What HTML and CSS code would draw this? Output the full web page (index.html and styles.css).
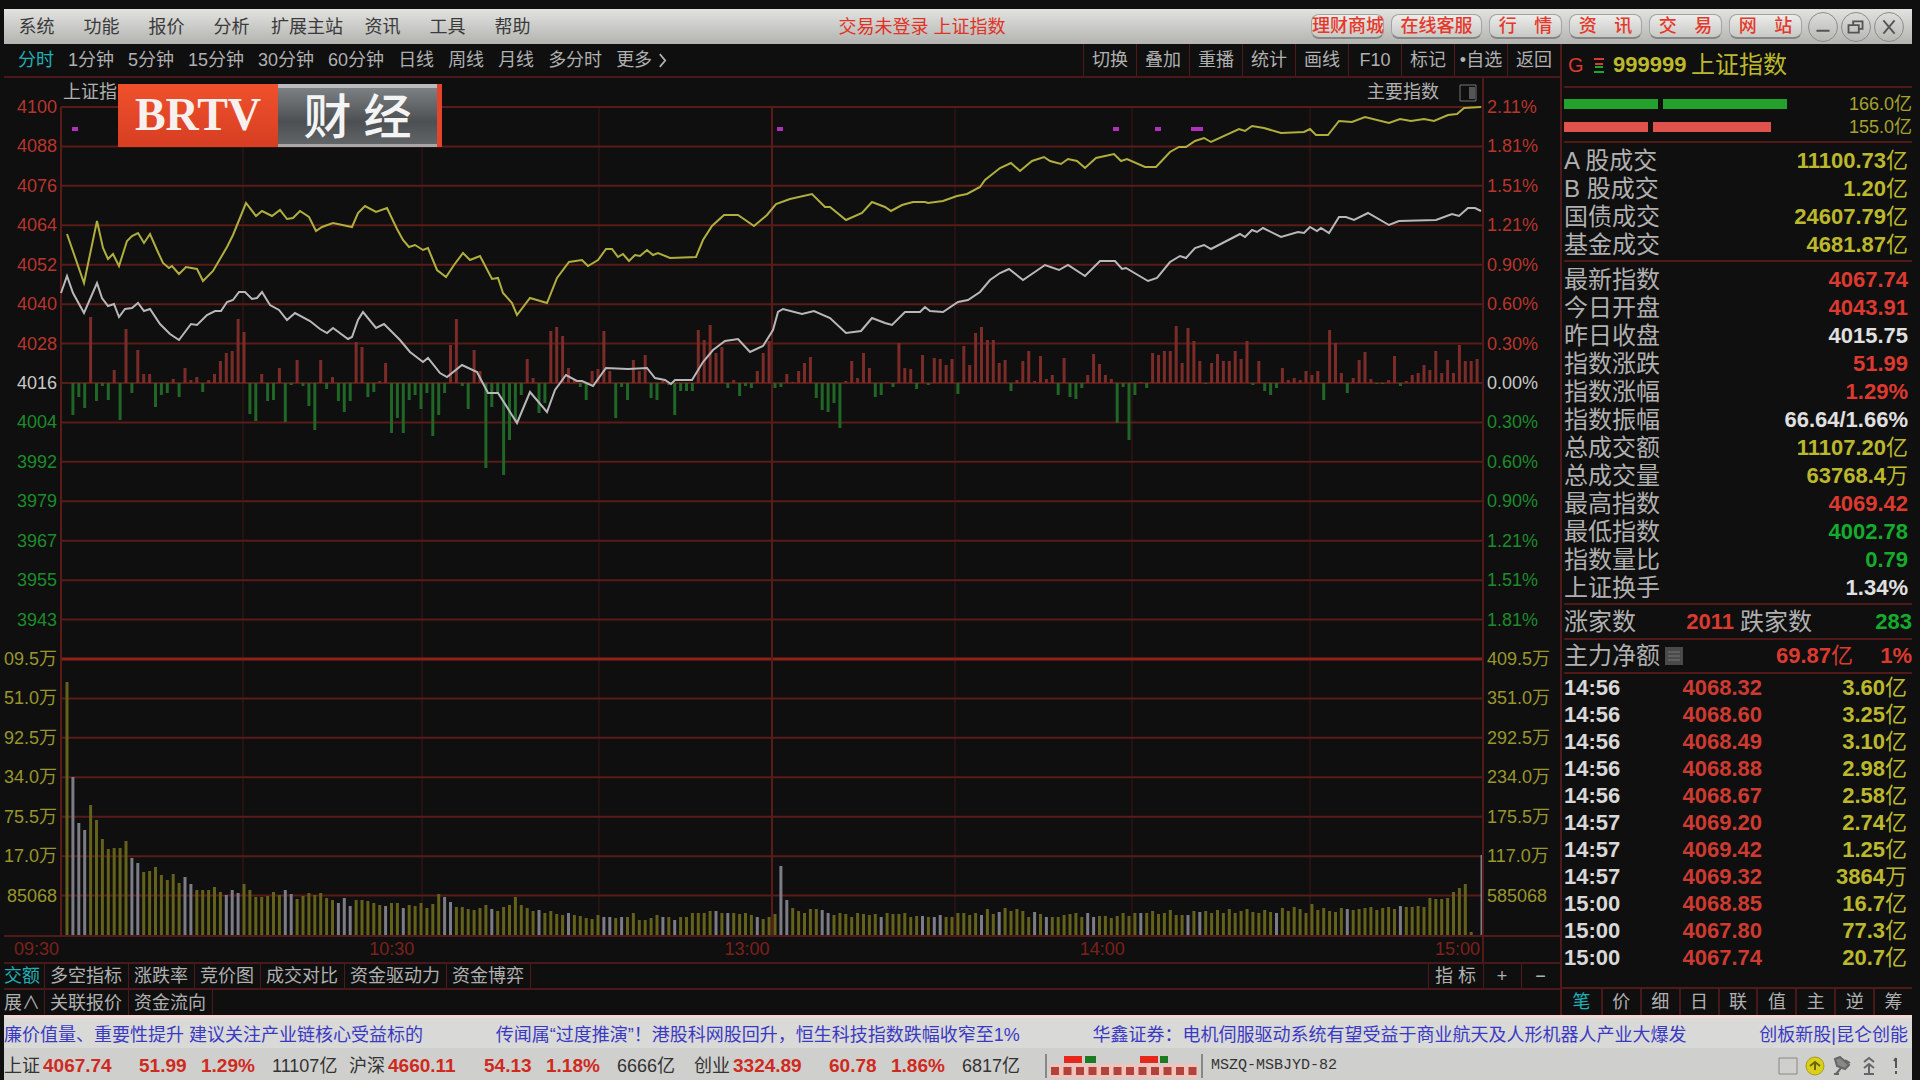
FILE: index.html
```html
<!DOCTYPE html>
<html lang="zh-CN">
<head>
<meta charset="utf-8">
<title>上证指数</title>
<link rel="stylesheet" href="styles.css">
</head>
<body>
<header class="menubar">
  <nav class="menus">
    <button>系统</button><button>功能</button><button>报价</button><button>分析</button><button>扩展主站</button><button>资讯</button><button>工具</button><button>帮助</button>
  </nav>
  <h1 class="title">交易未登录 上证指数</h1>
  <div class="quick">
    <button class="pill tight">理财商城</button><button class="pill wide">在线客服</button><button class="pill"><span>行</span><span>情</span></button><button class="pill"><span>资</span><span>讯</span></button><button class="pill"><span>交</span><span>易</span></button><button class="pill"><span>网</span><span>站</span></button>
  </div>
  <div class="winctl">
    <button aria-label="最小化"><svg viewBox="0 0 30 30"><path d="M8 19h14" /></svg></button>
    <button aria-label="还原"><svg viewBox="0 0 30 30"><path d="M12 13V9h10v8h-4M7 13h11v8H7z" /></svg></button>
    <button aria-label="关闭"><svg viewBox="0 0 30 30"><path d="M9 8l12 14M21 8L9 22" /></svg></button>
  </div>
</header>

<main class="workspace">
  <section class="left">
    <div class="toolbar">
      <nav class="periods">
        <button class="on">分时</button><button>1分钟</button><button>5分钟</button><button>15分钟</button><button>30分钟</button><button>60分钟</button><button>日线</button><button>周线</button><button>月线</button><button>多分时</button><button>更多<svg class="chev" viewBox="0 0 10 16"><path d="M2 1l6 7-6 7" /></svg></button>
      </nav>
      <nav class="tools">
        <button>切换</button><button>叠加</button><button>重播</button><button>统计</button><button>画线</button><button>F10</button><button>标记</button><button>•自选</button><button>返回</button>
      </nav>
    </div>
    <div class="charthead">
      <span class="chartname">上证指</span>
      <div class="overlay">
        <button>主要指数</button>
        <svg class="panelicon" viewBox="0 0 20 18"><path d="M2 1h16v16H2z" /><path class="fill" d="M11 3h6v12h-6z" /></svg>
      </div>
      <div class="corner"></div>
    </div>
    <div class="chart">
      <div class="axis axis-left" id="axisLeft"></div>
      <svg class="plot" id="plot" viewBox="61 107 1421 828" preserveAspectRatio="none" role="img" aria-label="上证指数分时走势"></svg>
      <div class="axis axis-right" id="axisRight"></div>
    </div>
    <div class="times"><span>09:30</span><span>10:30</span><span>13:00</span><span>14:00</span><span>15:00</span><span class="rest"></span></div>
    <nav class="tabs">
      <button class="on">交额</button><button>多空指标</button><button>涨跌率</button><button>竞价图</button><button>成交对比</button><button>资金驱动力</button><button>资金博弈</button>
      <div class="indicators"><button class="ind">指 标</button><button class="zoom">+</button><button class="zoom last">−</button></div>
    </nav>
    <nav class="tabs second"><button>展∧</button><button>关联报价</button><button>资金流向</button></nav>
    <div class="logo"><span class="brand">BRTV</span><span class="channel"><b>财</b><b>经</b></span></div>
  </section>

  <aside class="side">
    <div class="symbol">
      <span class="g">G</span>
      <svg viewBox="0 0 12 18"><path class="sr" d="M1 3h10" /><path class="sr" d="M2 8h8" /><path class="sg" d="M2 11h8" /><path class="sg" d="M1 16h10" /></svg>
      <b>999999</b><span class="name">上证指数</span>
    </div>
    <div class="depth">
      <div class="drow"><i class="up" style="width:94px"></i><i class="up" style="width:124px"></i><span>166.0亿</span></div>
      <div class="drow"><i class="dn" style="width:84px"></i><i class="dn" style="width:118px"></i><span>155.0亿</span></div>
    </div>
    <table class="info">
      <tbody>
      <tr><th scope="row">A 股成交</th><td class="y">11100.73<em>亿</em></td></tr>
      <tr><th scope="row">B 股成交</th><td class="y">1.20<em>亿</em></td></tr>
      <tr><th scope="row">国债成交</th><td class="y">24607.79<em>亿</em></td></tr>
      <tr><th scope="row">基金成交</th><td class="y">4681.87<em>亿</em></td></tr>
      </tbody>
    </table>
    <table class="info">
      <tbody>
      <tr><th scope="row">最新指数</th><td class="r">4067.74</td></tr>
      <tr><th scope="row">今日开盘</th><td class="r">4043.91</td></tr>
      <tr><th scope="row">昨日收盘</th><td class="w">4015.75</td></tr>
      <tr><th scope="row">指数涨跌</th><td class="r">51.99</td></tr>
      <tr><th scope="row">指数涨幅</th><td class="r">1.29%</td></tr>
      <tr><th scope="row">指数振幅</th><td class="w">66.64/1.66%</td></tr>
      <tr><th scope="row">总成交额</th><td class="y">11107.20<em>亿</em></td></tr>
      <tr><th scope="row">总成交量</th><td class="y">63768.4<em>万</em></td></tr>
      <tr><th scope="row">最高指数</th><td class="r">4069.42</td></tr>
      <tr><th scope="row">最低指数</th><td class="g">4002.78</td></tr>
      <tr><th scope="row">指数量比</th><td class="g">0.79</td></tr>
      <tr><th scope="row">上证换手</th><td class="w">1.34%</td></tr>
      </tbody>
    </table>
    <div class="pair"><span>涨家数</span><b class="r">2011</b><span>跌家数</span><b class="g">283</b></div>
    <div class="net"><span>主力净额</span><svg viewBox="0 0 20 20"><path d="M1 1h18v18H1z" /><path class="bar" d="M4 6h12M4 10h12M4 14h12" /></svg><b class="r">69.87<em>亿</em></b><b class="r pct">1%</b></div>
    <table class="ticks">
      <tbody>
      <tr><td>14:56</td><td>4068.32</td><td>3.60<em>亿</em></td></tr>
      <tr><td>14:56</td><td>4068.60</td><td>3.25<em>亿</em></td></tr>
      <tr><td>14:56</td><td>4068.49</td><td>3.10<em>亿</em></td></tr>
      <tr><td>14:56</td><td>4068.88</td><td>2.98<em>亿</em></td></tr>
      <tr><td>14:56</td><td>4068.67</td><td>2.58<em>亿</em></td></tr>
      <tr><td>14:57</td><td>4069.20</td><td>2.74<em>亿</em></td></tr>
      <tr><td>14:57</td><td>4069.42</td><td>1.25<em>亿</em></td></tr>
      <tr><td>14:57</td><td>4069.32</td><td>3864<em>万</em></td></tr>
      <tr><td>15:00</td><td>4068.85</td><td>16.7<em>亿</em></td></tr>
      <tr><td>15:00</td><td>4067.80</td><td>77.3<em>亿</em></td></tr>
      <tr><td>15:00</td><td>4067.74</td><td>20.7<em>亿</em></td></tr>
      </tbody>
    </table>
    <nav class="sidetabs"><button class="on">笔</button><button>价</button><button>细</button><button>日</button><button>联</button><button>值</button><button>主</button><button>逆</button><button>筹</button></nav>
  </aside>
</main>

<div class="ticker">
  <a href="#">廉价值量、重要性提升 建议关注产业链核心受益标的</a>
  <a href="#">传闻属“过度推演”！港股科网股回升，恒生科技指数跌幅收窄至1%</a>
  <a href="#">华鑫证券：电机伺服驱动系统有望受益于商业航天及人形机器人产业大爆发</a>
  <a href="#">创板新股|昆仑创能</a>
</div>
<footer class="status">
  <div class="quote"><span>上证</span><b>4067.74</b><b>51.99</b><b>1.29%</b><span>11107亿</span></div>
  <div class="quote"><span>沪深</span><b>4660.11</b><b>54.13</b><b>1.18%</b><span>6666亿</span></div>
  <div class="quote"><span>创业</span><b>3324.89</b><b>60.78</b><b>1.86%</b><span>6817亿</span></div>
  <div class="heat"><svg viewBox="0 0 148 24" id="heat"><rect width="148" height="14" y="10" fill="#efc4bd" /><rect x="14" y="2" width="18" height="7" fill="#e8271b" /><rect x="35" y="2" width="11" height="7" fill="#1d7a22" /><rect x="90" y="2" width="18" height="7" fill="#e8271b" /><rect x="110" y="2" width="8" height="7" fill="#1d7a22" /></svg></div>
  <span class="host">MSZQ-MSBJYD-82</span>
  <div class="tray">
    <svg viewBox="0 0 20 20"><path d="M1 2h18v16H1z" fill="none" stroke="#888" /></svg>
    <svg viewBox="0 0 20 20"><circle cx="10" cy="10" r="9" fill="#d9cf1c" stroke="#a89f10" /><path d="M5 10l5-4 5 4M10 6v8" fill="none" stroke="#6d6608" stroke-width="2" /></svg>
    <svg viewBox="0 0 20 20"><path d="M3 3l5-2 9 8-4 4-8-3zM9 12l-5 6M13 4l5 3M2 18h5" fill="#888" stroke="#666" stroke-width="2" /></svg>
    <svg viewBox="0 0 20 20"><path d="M5 6l5-4 5 4M5 12l5-4 5 4M10 8v10M5 18h10" fill="none" stroke="#666" stroke-width="2" /></svg>
    <svg viewBox="0 0 20 20"><path d="M10 2v10M10 15v3M8 5l2-3" fill="none" stroke="#555" stroke-width="2" /></svg>
  </div>
</footer>
<script src="chart.js"></script>
</body>
</html>
```
FILE: styles.css
```css
* { box-sizing: border-box; }
:root { --line: #52191a; --red: #dc3a2f; --green: #14ac2c; --yellow: #bcb82c; --grey: #b0b0b0; }
body {
  margin: 0; padding: 9px 8px 0 4px; height: 100vh; min-height: 960px;
  display: flex; flex-direction: column;
  background: #0f0f0f; color: var(--grey);
  font: 18px/24px "Liberation Sans", "Noto Sans CJK SC", sans-serif;
}
button { font: inherit; color: inherit; background: none; border: 0; padding: 0; margin: 0; white-space: nowrap; }
em { font-style: normal; font-weight: 400; }
svg { display: block; flex: none; }
.r { color: var(--red); } .g { color: var(--green); } .w { color: #e0e0e0; } .y { color: var(--yellow); }

.menubar { height: 35px; flex: none; display: flex; align-items: center; background: linear-gradient(#e2e2e0, #b3b3b0); color: #3a3a3a; }
.menus { display: flex; }
.menus button { min-width: 65px; padding: 0 7px; }
.title { flex: 1; margin: 0; padding-right: 12px; text-align: center; font-size: 18px; font-weight: 400; color: #e03326; }
.quick { display: flex; gap: 7px; color: #e5382a; }
.pill { width: 73px; height: 25px; display: flex; justify-content: space-around; border: 1px solid #a3a3a0; border-bottom: 2px solid #858583; border-radius: 8px; background: linear-gradient(#ececea, #c8c8c5); line-height: 22px; font-weight: 500; }
.pill.wide { width: 91px; }
.winctl { display: flex; gap: 3px; margin: 0 8px 0 6px; }
.winctl svg { width: 30px; height: 30px; border: 1px solid #8c8c8a; border-radius: 50%; fill: none; stroke: #555; stroke-width: 2; }

.workspace { flex: 1; min-height: 0; display: flex; }
.left { flex: 1; min-width: 0; display: flex; flex-direction: column; position: relative; }
.toolbar { height: 34px; flex: none; display: flex; justify-content: space-between; border-bottom: 2px solid #47191a; }
.periods { display: flex; gap: 14px; padding-left: 14px; }
.periods button { display: flex; align-items: center; gap: 6px; }
.chev { width: 9px; height: 15px; fill: none; stroke: currentColor; stroke-width: 2; }
.on { color: #1fb0b8; }
.tools { display: grid; grid-template-columns: repeat(9, 53px); }
.tools button { border-left: 1px solid var(--line); }

.charthead { height: 29px; flex: none; display: flex; justify-content: space-between; line-height: 29px; }
.chartname { padding-left: 59px; }
.overlay { margin-left: auto; display: flex; align-items: center; gap: 19px; padding-right: 4px; }
.panelicon { width: 20px; height: 18px; fill: none; stroke: #777; }
.panelicon .fill { fill: #555; stroke: none; }
.corner { width: 78px; border-left: 2px solid var(--line); }

.chart { flex: 1; min-height: 0; display: grid; grid-template-columns: 57px 1fr 78px; }
.axis { display: grid; grid-auto-rows: 1fr; min-height: 0; white-space: nowrap; }
.axis span { margin-top: -12px; height: 24px; }
.axis-left { justify-items: end; padding-right: 5px; }
.axis-right { padding-left: 3px; border-left: 2px solid var(--line); }
.axis .r { color: #b8352c; } .axis .g { color: #1c8c2a; } .axis .y { color: #98962c; } .axis .w { color: #c8c8c8; }
.plot { width: 100%; height: 100%; min-height: 0; overflow: visible; }
.plot path, .plot line, .plot polyline { vector-effect: non-scaling-stroke; fill: none; }
.h { stroke: #5a1c18; stroke-width: 2; }
.h.strong { stroke: #8c2218; stroke-width: 3; }
.v { stroke: #241312; stroke-width: 2; }
.v.strong { stroke: #5a1c18; }
.bar-up { stroke: #7c2c28; stroke-width: 3; }
.bar-down { stroke: #1f6627; stroke-width: 3; }
.vol-y { stroke: #64611b; stroke-width: 3; }
.vol-g { stroke: #7c7c86; stroke-width: 3; }
.line-y { stroke: #b0ae3c; stroke-width: 2; }
.line-w { stroke: #b8b8ba; stroke-width: 2; }
.dot { fill: #b02fbc; }

.times { height: 27px; flex: none; display: grid; grid-template-columns: 57px 1fr 1fr 1fr 1fr 78px; text-align: right; color: #7c211b; border-top: 2px solid var(--line); }
.times span { padding-right: 2px; }
.rest { border-left: 2px solid var(--line); }
.tabs { height: 26px; flex: none; display: flex; border-top: 2px solid #47191a; }
.tabs.second { height: 27px; }
.tabs button { padding: 0 6px 0 5px; border-right: 1px solid var(--line); line-height: 22px; }
.tabs > button:first-child { width: 41px; padding: 0 4px 0 0; text-align: right; }
.tabs.second > button:first-child { text-align: left; }
.indicators { margin-left: auto; display: flex; border-left: 1px solid var(--line); }
.indicators .ind { width: 55px; }
.indicators .zoom { width: 38px; }
.indicators .last { border-right: 0; }

.logo { position: absolute; left: 114px; top: 40px; width: 324px; height: 63px; display: flex; border-right: 5px solid #e2452c; }
.brand { width: 160px; background: linear-gradient(#f0512c, #d63e22); color: #f6f0ee; font: bold 46px/62px "Liberation Serif", serif; text-align: center; }
.channel { flex: 1; display: flex; justify-content: center; gap: 12px; background: linear-gradient(#7d8083, #4d5053 60%, #626568); border-top: 4px solid #b9bcbe; border-bottom: 3px solid #a6a9ab; color: #f4f4f4; font-size: 48px; line-height: 60px; }
.channel b { font-weight: 500; }

.side { width: 352px; flex: none; display: flex; flex-direction: column; border-left: 2px solid var(--line); padding-left: 2px; font-size: 24px; }
.symbol { height: 44px; flex: none; display: flex; align-items: center; color: var(--yellow); border-bottom: 2px solid var(--line); }
.symbol .g { width: 29px; padding-left: 4px; color: var(--red); font-size: 20px; }
.symbol svg { width: 12px; height: 18px; margin-right: 8px; fill: none; stroke-width: 2; }
.sr { stroke: var(--red); } .sg { stroke: var(--green); }
.symbol b { font-size: 22px; width: 78px; }
.depth { height: 55px; flex: none; padding-top: 4px; border-bottom: 2px solid var(--line); font-size: 18px; color: #a5a22c; }
.drow { display: flex; align-items: center; gap: 5px; height: 23px; }
.drow i { height: 10px; }
.drow span { margin-left: auto; }
.up { background: #23a12c; } .dn { background: #e0534c; }
table { border-collapse: separate; border-spacing: 0; width: 100%; }
th, td { padding: 0; font-weight: 400; text-align: left; white-space: nowrap; }
.info { flex: none; border-bottom: 2px solid var(--line); padding: 4px 0 1px; }
.info tr { height: 28px; line-height: 28px; }
.info td { text-align: right; font-weight: 700; font-size: 22px; padding-right: 4px; }
.pair, .net { height: 35px; flex: none; display: grid; align-items: center; border-bottom: 2px solid var(--line); }
.pair b, .net b { font-size: 22px; text-align: right; }
.pair { grid-template-columns: 72px 98px 78px 1fr; }
.pair span + b + span { padding-left: 6px; }
.net { height: 34px; grid-template-columns: 100px 20px 169px 1fr; }
.net svg { width: 20px; height: 20px; fill: #4a4a4a; }
.bar { stroke: #777; stroke-width: 1; }
.ticks { flex: none; }
.ticks tr { height: 27px; line-height: 27px; font-size: 22px; }
.ticks td { font-weight: 700; color: #d8d8d8; width: 90px; }
.ticks td:nth-child(2) { text-align: right; color: #cc3a30; width: 108px; }
.ticks td:nth-child(3) { text-align: right; color: var(--yellow); width: auto; padding-right: 5px; }
.sidetabs { flex: 1; display: grid; grid-template-columns: repeat(9, 1fr); border-top: 2px solid var(--line); margin: auto 0 0 -2px; max-height: 28px; font-size: 18px; }
.sidetabs button + button { border-left: 2px solid #47191a; }

.ticker { height: 33px; flex: none; display: flex; justify-content: space-between; border-top: 3px solid #f3d8d4; background: #d9d9d7; padding-right: 4px; line-height: 34px; overflow: hidden; }
.ticker a { color: #3a39c4; text-decoration: none; white-space: nowrap; }
.status { height: 32px; flex: none; display: flex; align-items: center; background: #cfcfcd; color: #333; line-height: 32px; padding-top: 4px; }
.quote { display: grid; grid-template-columns: 39px 96px 62px 71px 77px; white-space: nowrap; }
.quote b { font-size: 19px; color: #cf2a20; }
.heat { margin-left: 6px; padding: 0 3px; border: solid #888; border-width: 0 2px; }
.heat svg { width: 148px; height: 24px; }
.host { margin-left: 8px; font: 15px/24px "Liberation Mono", monospace; }
.tray { margin-left: auto; display: flex; gap: 7px; padding-right: 6px; }
.tray svg { width: 20px; height: 20px; }
```
FILE: chart.js
```js
const NS = 'http://www.w3.org/2000/svg';
const plot = document.getElementById('plot');
const TOP = 107, ROW = 828 / 21, BASE = 935, ZERO = 383, LEFT = 61, RIGHT = 1482;
const minuteX = i => 67 + i * 5.9;

function add(parent, name, attrs) {
  const el = document.createElementNS(NS, name);
  for (const key in attrs) el.setAttribute(key, attrs[key]);
  parent.appendChild(el);
}

function labels(id, rows) {
  const axis = document.getElementById(id);
  rows.forEach(([cls, list]) => list.split(' ').forEach(text => {
    const s = document.createElement('span');
    s.className = cls;
    s.textContent = text;
    axis.appendChild(s);
  }));
}
labels('axisLeft', [
  ['r', '4100 4088 4076 4064 4052 4040 4028'], ['w', '4016'],
  ['g', '4004 3992 3979 3967 3955 3943'],
  ['y', '09.5万 51.0万 92.5万 34.0万 75.5万 17.0万 85068']]);
labels('axisRight', [
  ['r', '2.11% 1.81% 1.51% 1.21% 0.90% 0.60% 0.30%'], ['w', '0.00%'],
  ['g', '0.30% 0.60% 0.90% 1.21% 1.51% 1.81%'],
  ['y', '409.5万 351.0万 292.5万 234.0万 175.5万 117.0万 585068']]);

[243, 422, 599, 955, 1132, 1310].forEach(x => add(plot, 'line', { class: 'v', x1: x, x2: x, y1: TOP, y2: BASE }));
for (let i = 0; i < 21; i++) {
  const y = TOP + i * ROW;
  add(plot, 'line', { class: i === 14 ? 'h strong' : 'h', x1: LEFT, x2: RIGHT, y1: y, y2: y });
}
[LEFT, 772].forEach(x => add(plot, 'line', { class: 'v strong', x1: x, x2: x, y1: TOP, y2: BASE }));

// Volume per minute
const volume = [253,158,112,105,130,115,96,86,87,87,94,77,72,63,64,68,60,55,61,52,58,51,45,45,45,48,43,40,45,42,51,45,38,38,39,43,40,45,41,36,39,42,40,42,37,35,32,37,29,35,35,34,32,30,29,32,32,27,30,29,32,27,31,41,38,33,28,28,26,25,
27,30,26,24,28,30,38,30,27,24,25,22,24,21,20,22,20,19,17,16,20,
18,18,17,18,18,22,15,15,17,20,18,18,15,18,18,22,22,22,24,24,22,22,22,21,22,20,18,16,18,21,69,35,27,24,22,26,26,25,22,20,22,21,18,22,21,20,21,18,22,21,21,22,18,19,19,18,18,20,18,18,22,22,20,22,20,26,21,23,27,24,26,24,18,23,21,18,18,18,20,21,22,18,22,18,19,19,17,19,22,19,22,22,22,24,21,22,25,20,20,20,24,23,24,22,25,22,26,22,
24,26,23,22,25,23,22,27,24,28,26,22,31,25,27,24,23,27,26,25,26,27,28,25,27,28,26,29,28,28,29,28,37,36,36,37,43,47,51,3];
const greyMinutes = new Set([1,2,3,11,12,20,21,27,28,29,37,38,46,47,48,54,57,64,65,72,80,85,91,92,94,101,103,110,112,117,121,122,128,129,138,145,147,148,155,158,164,166,173,174,182,190,192,205,217,226]);
volume.forEach((h, i) => add(plot, 'line', { class: greyMinutes.has(i) ? 'vol-g' : 'vol-y', x1: minuteX(i), x2: minuteX(i), y1: BASE, y2: BASE - h }));
add(plot, 'line', { class: 'vol-g', x1: RIGHT, x2: RIGHT, y1: BASE, y2: BASE - 80 });

// Buying strength above zero, selling strength below
const strength = [0,-32,-14,-25,66,-18,-3,-17,13,-37,54,-10,33,9,9,-24,-12,-10,4,-14,15,3,6,-9,3,9,22,30,32,64,51,-31,-38,9,-18,-17,15,-39,-2,23,-3,-23,-47,23,-6,6,-18,-29,-18,41,36,-14,-9,2,20,-50,-35,-50,-17,-12,-26,-10,-53,-32,-10,38,64,-3,-26,33,12,-85,-24,-10,-92,-57,-38,
-12,24,5,-30,-20,52,56,47,15,4,-4,-17,12,14,52,12,-35,-4,-17,23,12,28,-15,-17,2,-2,-32,-8,-8,-8,53,43,58,30,36,-5,3,-13,-3,-5,12,30,42,-5,-4,9,1,12,20,26,-15,-27,-29,-20,-45,2,22,5,30,15,-14,-12,1,-4,40,15,14,-6,28,-2,25,24,18,24,-11,37,18,50,56,43,43,20,23,-8,
3,22,32,2,27,4,8,-12,25,-14,-16,-5,8,29,19,8,4,-40,-4,-57,-12,1,-5,30,28,32,32,57,20,55,42,22,-1,20,29,22,22,32,24,42,-2,22,-8,-12,-5,15,3,5,3,12,8,12,-17,53,40,10,-10,5,23,31,4,-1,-1,3,27,-3,2,8,10,18,13,32,10,23,10,38,22,22,24];
strength.forEach((h, i) => add(plot, 'line', { class: h > 0 ? 'bar-up' : 'bar-down', x1: minuteX(i), x2: minuteX(i), y1: ZERO, y2: ZERO - h }));

add(plot, 'polyline', { class: 'line-y', points: '67,234 84,283 97,221 103,248 108,259 113,254 119,266 127,241 132,236 138,233 144,243 150,234 157,250 163,263 169,268 172,266 179,274 186,267 197,269 203,281 213,271 227,247 233,235 246,203 256,216 262,211 272,216 280,210 287,219 293,218 300,211 309,217 316,231 322,227 333,223 352,227 358,213 365,206 376,212 387,208 397,229 403,240 409,247 415,245 423,250 428,248 437,270 446,277 454,265 463,253 470,260 480,256 492,279 498,278 503,293 512,303 517,315 530,298 547,303 557,278 569,262 582,260 588,266 598,260 606,249 612,249 618,257 623,254 629,261 635,255 640,256 647,250 653,255 658,253 670,258 696,257 703,240 712,226 724,215 738,215 754,226 767,215 776,204 790,199 812,194 825,207 830,207 846,220 862,213 872,202 885,207 891,211 902,205 913,202 925,202 928,203 943,201 957,196 967,194 980,187 985,180 1000,168 1011,163 1020,171 1032,161 1044,157 1050,161 1061,164 1068,159 1077,161 1085,168 1096,158 1114,154 1121,161 1127,159 1145,167 1156,167 1170,152 1179,147 1186,147 1195,141 1204,138 1211,142 1239,129 1245,131 1252,126 1264,128 1281,133 1304,132 1310,129 1316,135 1328,135 1339,121 1352,122 1365,117 1389,123 1400,119 1411,121 1424,119 1434,121 1448,115 1457,114 1464,108 1481,107' });
add(plot, 'polyline', { class: 'line-w', points: '61,293 67,276 73,293 84,313 97,283 102,298 108,306 114,304 119,317 125,309 132,308 138,303 144,311 150,309 160,324 170,334 179,340 191,324 197,325 207,315 215,311 221,311 227,302 233,300 239,292 245,292 252,299 257,298 262,292 270,305 279,310 287,320 295,313 310,321 320,329 327,333 333,328 348,339 352,337 358,320 363,312 376,328 384,324 400,340 410,352 423,362 428,358 440,373 447,377 462,365 477,372 488,393 498,393 517,423 530,392 547,412 555,390 566,375 577,381 582,381 593,386 606,368 628,369 647,368 655,378 665,380 671,384 675,380 692,380 703,362 713,350 725,341 738,339 750,352 763,346 773,330 778,312 783,309 802,314 814,311 830,318 846,333 861,331 872,318 885,323 892,325 905,312 920,312 925,307 930,311 943,312 958,302 968,300 980,292 990,280 1000,273 1009,269 1023,280 1045,265 1059,270 1068,265 1085,276 1100,261 1115,261 1122,269 1126,268 1148,281 1157,278 1170,262 1180,256 1186,258 1195,248 1204,245 1211,249 1240,234 1245,237 1252,230 1257,232 1263,228 1281,237 1298,232 1304,233 1310,227 1317,231 1321,228 1329,233 1339,217 1346,217 1354,220 1368,213 1389,225 1399,221 1436,220 1452,214 1459,216 1468,208 1475,208 1481,211' });
[75, 780, 1116, 1158, 1194, 1200].forEach(x => add(plot, 'rect', { class: 'dot', x: x - 3, y: 127, width: 6, height: 4 }));

const heat = document.getElementById('heat');
for (let i = 0; i < 12; i++) add(heat, 'rect', { x: 1 + i * 12.5, y: 13, width: 8, height: 8, fill: '#b0443c' });
```
